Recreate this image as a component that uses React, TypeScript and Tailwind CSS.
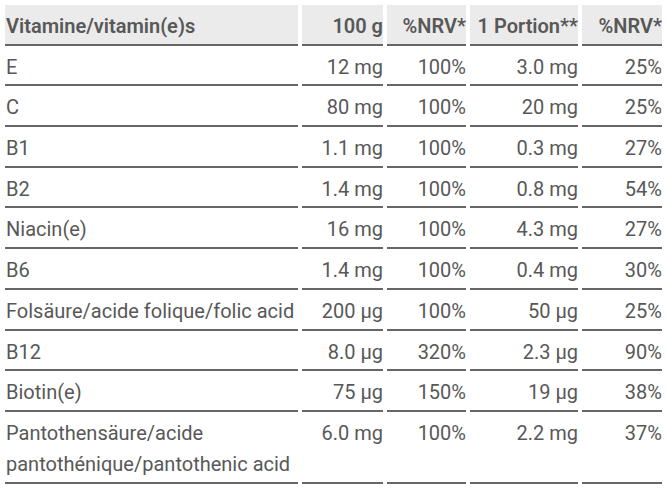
import React from "react";

type Row = { name: React.ReactNode; g100: string; nrv1: string; portion: string; nrv2: string };

const rows: Row[] = [
  { name: "E", g100: "12 mg", nrv1: "100%", portion: "3.0 mg", nrv2: "25%" },
  { name: "C", g100: "80 mg", nrv1: "100%", portion: "20 mg", nrv2: "25%" },
  { name: "B1", g100: "1.1 mg", nrv1: "100%", portion: "0.3 mg", nrv2: "27%" },
  { name: "B2", g100: "1.4 mg", nrv1: "100%", portion: "0.8 mg", nrv2: "54%" },
  { name: "Niacin(e)", g100: "16 mg", nrv1: "100%", portion: "4.3 mg", nrv2: "27%" },
  { name: "B6", g100: "1.4 mg", nrv1: "100%", portion: "0.4 mg", nrv2: "30%" },
  { name: "Folsäure/acide folique/folic acid", g100: "200 µg", nrv1: "100%", portion: "50 µg", nrv2: "25%" },
  { name: "B12", g100: "8.0 µg", nrv1: "320%", portion: "2.3 µg", nrv2: "90%" },
  { name: "Biotin(e)", g100: "75 µg", nrv1: "150%", portion: "19 µg", nrv2: "38%" },
  {
    name: (
      <>
        Pantothensäure/acide
        <br />
        pantothénique/pantothenic acid
      </>
    ),
    g100: "6.0 mg",
    nrv1: "100%",
    portion: "2.2 mg",
    nrv2: "37%",
  },
];

const cell = "border-b-2 border-[#666] pt-[6px] pb-[1.7px] align-top";

export default function App() {
  return (
    <div className="bg-white w-[667px] h-[490px] pt-[1px] pl-[1px] font-['Roboto',sans-serif] text-[20px] leading-[31px] text-[#585858]">
      <table className="table-fixed w-[665px] border-separate border-spacing-x-[4px] border-spacing-y-0 mt-[4px]">
        <colgroup>
          <col className="w-[293px]" />
          <col className="w-[81px]" />
          <col className="w-[79px]" />
          <col className="w-[108px]" />
          <col className="w-[80px]" />
        </colgroup>
        <thead>
          <tr className="bg-[#ebebeb]">
            <th className={`${cell} text-left pl-[1px] font-semibold`}>Vitamine/vitamin(e)s</th>
            <th className={`${cell} text-right font-semibold`}>100 g</th>
            <th className={`${cell} text-right font-semibold`}>%NRV*</th>
            <th className={`${cell} text-right font-semibold`}>1 Portion**</th>
            <th className={`${cell} text-right font-semibold`}>%NRV*</th>
          </tr>
        </thead>
        <tbody>
          {rows.map((r, i) => (
            <tr key={i}>
              <td className={`${cell} text-left pl-[1px]`}>{r.name}</td>
              <td className={`${cell} text-right`}>{r.g100}</td>
              <td className={`${cell} text-right`}>{r.nrv1}</td>
              <td className={`${cell} text-right`}>{r.portion}</td>
              <td className={`${cell} text-right`}>{r.nrv2}</td>
            </tr>
          ))}
        </tbody>
      </table>
    </div>
  );
}
